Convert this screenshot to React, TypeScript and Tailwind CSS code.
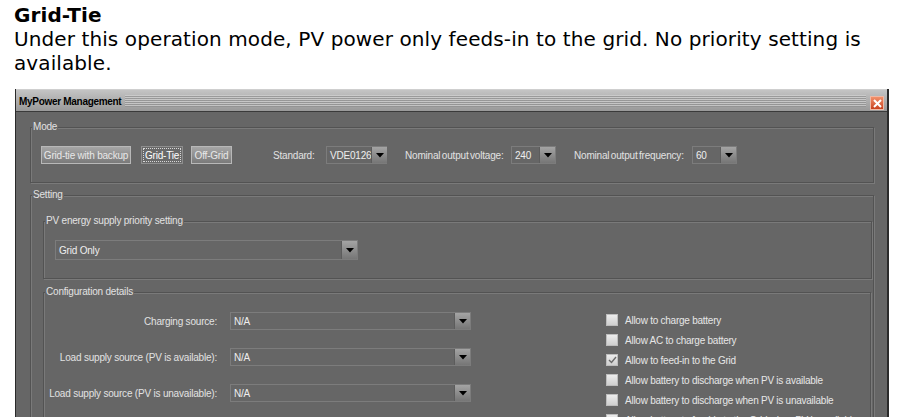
import React from "react";

function Arrow() {
  return (
    <div className="flex h-full w-[16px] shrink-0 items-center justify-center border-l border-[#5c5c5c] bg-gradient-to-b from-[#a4a4a4] to-[#767676]">
      <svg width="8" height="5" viewBox="0 0 8 5">
        <path d="M0 0 L8 0 L4 4.5 Z" fill="#000" />
      </svg>
    </div>
  );
}

function Combo({ value, className }: { value: string; className: string }) {
  return (
    <div className={`flex items-stretch border border-[#7c7c7c] bg-[#666666] ${className}`}>
      <div className="flex flex-1 items-center pl-[3px] text-[10px] tracking-[-0.2px] text-[#eeeeee]">{value}</div>
      <Arrow />
    </div>
  );
}

function Group({ label, className, children }: { label: string; className: string; children?: React.ReactNode }) {
  return (
    <div className={`relative border border-[#535353] shadow-[inset_1px_1px_0_#7a7a7a,1px_1px_0_#7a7a7a] ${className}`}>
      <span className="absolute left-[1px] top-[-7px] bg-[#666666] px-[1px] text-[10px] leading-[12px] tracking-[-0.2px] text-[#e2e2e2]">
        {label}
      </span>
      {children}
    </div>
  );
}

function Check({ label, checked }: { label: string; checked?: boolean }) {
  return (
    <div className="flex h-[12px] items-center gap-[7px]">
      <div className="flex h-[12px] w-[12px] shrink-0 items-center justify-center border border-[#bdbdbd] bg-gradient-to-b from-[#ececec] to-[#cfcfcf]">
        {checked && (
          <svg width="9" height="8" viewBox="0 0 9 8">
            <path d="M1 4 L3.5 6.5 L8 1" fill="none" stroke="#6a6a6a" strokeWidth="1.4" />
          </svg>
        )}
      </div>
      <span className="whitespace-nowrap text-[10px] tracking-[-0.25px] text-[#e6e6e6]">{label}</span>
    </div>
  );
}

export default function App() {
  return (
    <div className="h-[417px] w-[900px] overflow-hidden bg-white">
      <div className="pl-[14px] pt-[3px] font-['DejaVu_Sans',Verdana,sans-serif] text-[20px] leading-[24px] tracking-[0.1px] text-black">
        <div className="font-bold">Grid-Tie</div>
        <div className="whitespace-nowrap">Under this operation mode, PV power only feeds-in to the grid. No priority setting is</div>
        <div>available.</div>
      </div>

      <div className="ml-[15px] mt-[14px] w-[874px] border-l border-r-2 border-l-[#2a2a2a] border-r-[#2a2a2a] font-['Liberation_Sans',Arial,sans-serif]">
        {/* title bar */}
        <div className="flex h-[22px] items-end border-t border-[#cfcfcf] bg-gradient-to-b from-[#c4c4c4] to-[#999999] pb-[1px] pl-[3px] pr-[3px]">
          <div className="self-center pt-[2px] text-[10px] font-bold tracking-[-0.3px] text-black">MyPower Management</div>
          <div className="mx-[4px] mb-[3px] h-[12px] flex-1 bg-[repeating-linear-gradient(to_bottom,#d2d2d2_0px,#d2d2d2_1px,#8e8e8e_1px,#8e8e8e_2px)] opacity-70" />
          <div className="flex h-[14px] w-[14px] items-center justify-center border border-[#f0b8a4] bg-gradient-to-b from-[#f2906a] to-[#c8401c]">
            <svg width="9" height="9" viewBox="0 0 9 9">
              <path d="M1 1 L8 8 M8 1 L1 8" stroke="#fff" strokeWidth="2" />
            </svg>
          </div>
        </div>

        {/* body */}
        <div className="border-t border-[#3a3a3a] bg-[#666666] pb-[20px] pl-[14px] pr-[13px] pt-[15px]">
          <Group label="Mode" className="py-[18px] pl-[10px]">
            <div className="flex h-[18px] items-center text-[10px] tracking-[-0.2px]">
              <button className="h-[18px] w-[90px] whitespace-nowrap border border-[#b8b8b8] bg-gradient-to-b from-[#a6a6a6] to-[#7a7a7a] p-0 text-[#e8e8e8]">
                Grid-tie with backup
              </button>
              <button className="ml-[10px] h-[18px] w-[42px] whitespace-nowrap border border-[#8e8e8e] bg-[#696969] p-[1px] text-white">
                <span className="flex h-full w-full items-center justify-center border border-dotted border-[#d8d8d8]">Grid-Tie</span>
              </button>
              <button className="ml-[8px] h-[18px] w-[41px] whitespace-nowrap border border-[#b8b8b8] bg-gradient-to-b from-[#a6a6a6] to-[#7a7a7a] p-0 text-[#e8e8e8]">
                Off-Grid
              </button>
              <span className="ml-[41px] w-[53px] text-[#e2e2e2]">Standard:</span>
              <Combo value="VDE0126" className="h-[18px] w-[61px]" />
              <span className="ml-[18px] w-[106px] whitespace-nowrap text-[#e2e2e2] [word-spacing:-1px]">Nominal output voltage:</span>
              <Combo value="240" className="h-[18px] w-[45px]" />
              <span className="ml-[18px] w-[118px] whitespace-nowrap text-[#e2e2e2] [word-spacing:-1px]">Nominal output frequency:</span>
              <Combo value="60" className="h-[18px] w-[45px]" />
            </div>
          </Group>

          <Group label="Setting" className="mt-[12px] pb-[30px] pl-[12px] pr-[1px] pt-[25px]">
            <Group label="PV energy supply priority setting" className="py-[18px] pl-[11px]">
              <Combo value="Grid Only" className="h-[20px] w-[303px]" />
            </Group>

            <Group label="Configuration details" className="mr-[1px] mt-[13px] pb-[20px] pt-[19px]">
              <div className="flex">
                <div className="flex flex-col gap-[18px]">
                  {[
                    "Charging source:",
                    "Load supply source (PV is available):",
                    "Load supply source (PV is unavailable):",
                  ].map((l) => (
                    <div key={l} className="flex h-[18px] items-center">
                      <span className="w-[174px] whitespace-nowrap pr-[1px] text-right text-[10px] tracking-[-0.2px] text-[#e2e2e2]">{l}</span>
                      <Combo value="N/A" className="ml-[12px] h-[18px] w-[241px]" />
                    </div>
                  ))}
                </div>
                <div className="ml-[135px] mt-[2px] flex flex-col gap-[8px]">
                  <Check label="Allow to charge battery" />
                  <Check label="Allow AC to charge battery" />
                  <Check label="Allow to feed-in to the Grid" checked />
                  <Check label="Allow battery to discharge when PV is available" />
                  <Check label="Allow battery to discharge when PV is unavailable" />
                  <Check label="Allow battery to feed-in to the Grid when PV is available" />
                </div>
              </div>
            </Group>
          </Group>
        </div>
      </div>
    </div>
  );
}
